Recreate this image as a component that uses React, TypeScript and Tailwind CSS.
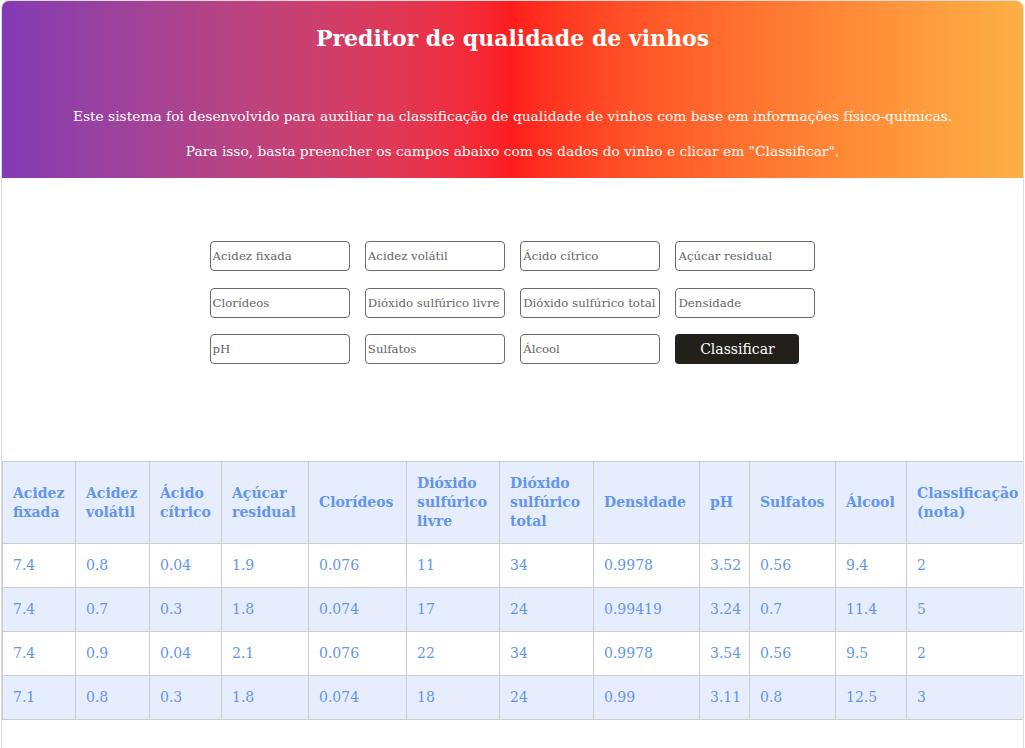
import React from "react";

const fields = [
  "Acidez fixada",
  "Acidez volátil",
  "Ácido cítrico",
  "Açúcar residual",
  "Clorídeos",
  "Dióxido sulfúrico livre",
  "Dióxido sulfúrico total",
  "Densidade",
  "pH",
  "Sulfatos",
  "Álcool",
];

const headers: string[][] = [
  ["Acidez", "fixada"],
  ["Acidez", "volátil"],
  ["Ácido", "cítrico"],
  ["Açúcar", "residual"],
  ["Clorídeos"],
  ["Dióxido", "sulfúrico", "livre"],
  ["Dióxido", "sulfúrico", "total"],
  ["Densidade"],
  ["pH"],
  ["Sulfatos"],
  ["Álcool"],
  ["Classificação", "(nota)"],
];

const widths = [73, 74, 72, 87, 98, 93, 94, 106, 50, 86, 71, 140];

const rows = [
  ["7.4", "0.8", "0.04", "1.9", "0.076", "11", "34", "0.9978", "3.52", "0.56", "9.4", "2"],
  ["7.4", "0.7", "0.3", "1.8", "0.074", "17", "24", "0.99419", "3.24", "0.7", "11.4", "5"],
  ["7.4", "0.9", "0.04", "2.1", "0.076", "22", "34", "0.9978", "3.54", "0.56", "9.5", "2"],
  ["7.1", "0.8", "0.3", "1.8", "0.074", "18", "24", "0.99", "3.11", "0.8", "12.5", "3"],
];

export default function App() {
  return (
    <div className="h-[748px] w-full overflow-hidden bg-white font-['DejaVu_Serif',serif]">
      <div className="mx-[1px] min-h-[780px] overflow-hidden rounded-t-lg border border-[#dcdcdc]">
        <header className="bg-gradient-to-r from-[#833ab4] via-[#fd1d1d] to-[#fcb045] pt-[23px] pb-[18px] text-center text-white">
          <h1 className="text-[22px] font-bold leading-[28px]">Preditor de qualidade de vinhos</h1>
          <p className="mt-[55px] text-[13.8px] leading-[18px]">
            Este sistema foi desenvolvido para auxiliar na classificação de qualidade de vinhos com base em informações físico-químicas.
          </p>
          <p className="mt-[17px] text-[13.8px] leading-[18px]">
            Para isso, basta preencher os campos abaixo com os dados do vinho e clicar em "Classificar".
          </p>
        </header>

        <form
          className="mx-auto mt-[63px] grid w-fit grid-cols-[repeat(4,140px)] gap-x-[15.3px] gap-y-[16.5px]"
          onSubmit={(e) => e.preventDefault()}
        >
          {fields.map((f) => (
            <input
              key={f}
              placeholder={f}
              className="h-[30px] w-[140px] rounded-[4px] border border-[#6b6b6b] bg-white px-[2px] py-0 text-[11.75px] leading-[26px] text-[#333] placeholder:text-[#666666] outline-none"
            />
          ))}
          <button
            type="submit"
            className="h-[30px] w-[124px] rounded-[4px] bg-[#231f1a] text-[14px] text-white"
          >
            Classificar
          </button>
        </form>

        <div className="mt-[97px] overflow-hidden">
          <table className="table-fixed border-collapse text-left text-[14px] leading-[19px] text-[#6495ed]" style={{ width: widths.reduce((a, b) => a + b, 0) }}>
            <colgroup>
              {widths.map((w, i) => (
                <col key={i} style={{ width: w }} />
              ))}
            </colgroup>
            <thead>
              <tr className="bg-[#e6edfd]">
                {headers.map((h, i) => (
                  <th key={i} className="h-[82px] border border-[#cccccc] px-[10px] py-[12px] align-middle font-bold whitespace-nowrap">
                    {h.map((line, j) => (
                      <div key={j}>{line}</div>
                    ))}
                  </th>
                ))}
              </tr>
            </thead>
            <tbody>
              {rows.map((r, i) => (
                <tr key={i} className={i % 2 === 1 ? "bg-[#e6edfd]" : "bg-white"}>
                  {r.map((c, j) => (
                    <td key={j} className="h-[44px] border border-[#cccccc] px-[10px] py-[12px] align-middle">
                      {c}
                    </td>
                  ))}
                </tr>
              ))}
            </tbody>
          </table>
        </div>
      </div>
    </div>
  );
}
